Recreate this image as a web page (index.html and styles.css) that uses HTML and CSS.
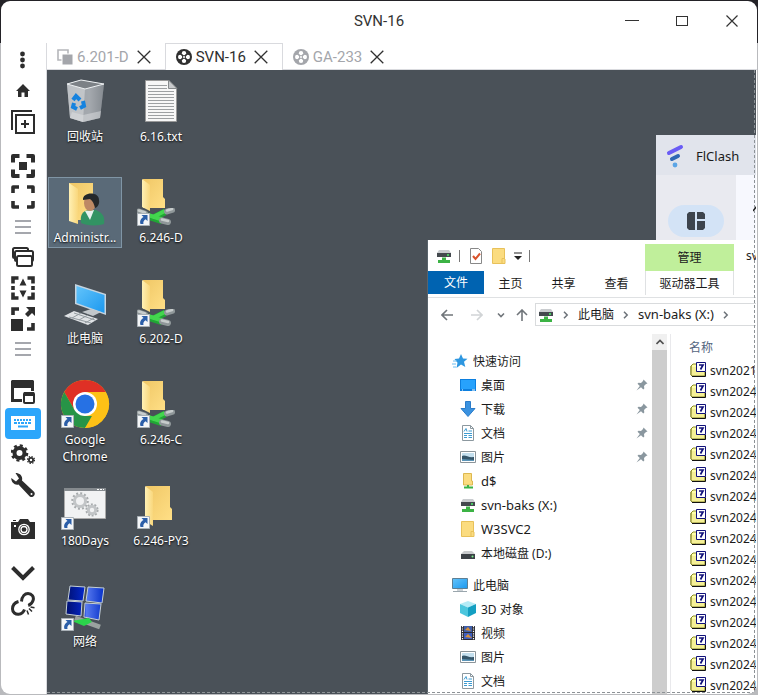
FILE: index.html
```html
<!DOCTYPE html>
<html lang="zh-CN">
<head>
<meta charset="utf-8">
<meta name="viewport" content="width=device-width, initial-scale=1">
<title>SVN-16</title>
<link rel="stylesheet" href="styles.css">
</head>
<body>
<svg class="defs" aria-hidden="true">
  <defs>
    <linearGradient id="gFolder" x1="0" x2="1" y1="0" y2="1"><stop offset="0" stop-color="#f0c766"/><stop offset="1" stop-color="#ffdf86"/></linearGradient>
    <linearGradient id="gFlap" x1="0" x2="1"><stop offset="0" stop-color="#fff0b4"/><stop offset="1" stop-color="#f9d77c"/></linearGradient>
    <linearGradient id="gScreen" x1="0" x2="1" y1="0" y2="1"><stop offset="0" stop-color="#63c4fb"/><stop offset="1" stop-color="#1b98ef"/></linearGradient>
    <linearGradient id="gNavy" x1="0" x2="1"><stop offset="0" stop-color="#001070"/><stop offset=".5" stop-color="#0428cc"/><stop offset=".52" stop-color="#5a7cf0"/><stop offset="1" stop-color="#0630c8"/></linearGradient>
    <linearGradient id="gBin" x1="0" x2="1"><stop offset="0" stop-color="#aeb3b8"/><stop offset=".6" stop-color="#c2c5ca"/><stop offset="1" stop-color="#84898f"/></linearGradient>
  </defs>
  <symbol id="x" viewBox="0 0 14 14"><path d="M.7.7l12.6 12.6M13.3.7L.7 13.3" fill="none" stroke="#303030" stroke-width="1.300"/></symbol>
  <symbol id="film" viewBox="0 0 16 16"><circle cx="8" cy="8" r="8" fill="currentColor"/><g fill="#fff"><circle cx="8" cy="4.200" r="2.200"/><circle cx="8" cy="11.800" r="2.200"/><circle cx="4.200" cy="8" r="2.200"/><circle cx="11.800" cy="8" r="2.200"/></g><path d="M5 5l6 6m0-6l-6 6" stroke="currentColor" stroke-width="1.600"/><circle cx="8" cy="8" r="1" fill="#fff"/></symbol>
  <symbol id="lines" viewBox="0 0 24 24"><path d="M4 6h16M4 12h16M4 18h16" stroke="#a5a7ad" stroke-width="2"/></symbol>
  <symbol id="shortcut" viewBox="0 0 13 13"><path d="M.5.5h12v12H.5z" fill="#f4f6f8" stroke="#a9b0b6"/><path d="M4.500 2h6v6L8.600 6.200C6.500 7.500 6 9 6.500 11H3.500C2.400 8 4 5.500 6.500 4z" fill="#2b5ea8"/></symbol>
  <symbol id="pipe" viewBox="0 0 38 17"><path d="M8 7.500l17 5.500M15 10.500L28 4" stroke="#21a635" stroke-width="6.500"/><path d="M8 6l17 5.500M15 9.500L28 3" stroke="#43d64e" stroke-width="4"/><path d="M2 3.500l6 2M30 3.500l5-1.500M25 12.500l6 1.500" stroke="#8f9799" stroke-width="6" stroke-linecap="round"/><path d="M2 2.500l6 2M30 2.500l5-1.500M25 11.500l6 1.500" stroke="#c7cccc" stroke-width="2.500" stroke-linecap="round"/></symbol>
  <symbol id="netfolder" viewBox="0 0 48 48"><path d="M6 0h20v18l2 2v9H6z" fill="url(#gFolder)"/><path d="M5 0l8 6v26l-8-4z" fill="url(#gFlap)"/><use href="#pipe" x="0" y="29" width="38" height="17"/><use href="#shortcut" x="0" y="34" width="13" height="13"/></symbol>
  <symbol id="star" viewBox="0 0 16 16"><path d="M9 1l2 4.500 4.500.3-3.500 3 1.300 5.200-4.300-2.500L4.500 15l1-5.200L2.500 6l4.500-.4z" fill="#2e97e0"/><path d="M1 8h4M0 11h4M1 14h3" stroke="#6bbdf0"/></symbol>
  <symbol id="desk" viewBox="0 0 16 16"><path d="M0 2h16v12H0z" fill="#0c7fdf"/><path d="M1 3h14v9H1z" fill="#27a2fc"/><path d="M2 13h1m9 0h3" stroke="#fff"/></symbol>
  <symbol id="down" viewBox="0 0 16 16"><path d="M5.500.5h5v7H15l-7 8-7-8h4.500z" fill="#3a92e0" stroke="#2b7cc9"/></symbol>
  <symbol id="doc" viewBox="0 0 16 16"><path d="M2.500.5h8l3 3v12h-11z" fill="#fff" stroke="#8c989f"/><path d="M10.500.5v3h3" fill="none" stroke="#8c989f"/><path d="M4 6.500l2-3 1 3M8.500 6h3.500M4 8.500h8M4 10.500h3m1.500 0H12M4 12.500h3m1.500 0H12" stroke="#3d9bd1" fill="none"/></symbol>
  <symbol id="pic" viewBox="0 0 16 16"><path d="M.5 2.500h15v11H.5z" fill="#fff" stroke="#8b9499"/><path d="M2 4h12v8H2z" fill="#c3dfee"/><path d="M2 7c3-2 6 2 12 1v4H2z" fill="#35566a"/><path d="M2 10l12 1v1H2z" fill="#5b94b7"/></symbol>
  <symbol id="ndrive" viewBox="0 0 16 16"><path d="M3 2h10l2 3H1z" fill="#c9cccf"/><path d="M1 5h14v4H1z" fill="#44494e"/><circle cx="12" cy="7" r="1" fill="#4df06a"/><path d="M6 9.500h4V12h4v3H2v-3h4z" fill="#3cb345"/></symbol>
  <symbol id="drive" viewBox="0 0 16 16"><path d="M4 6h8l3 3H1z" fill="#c9cbcd"/><path d="M1 9h14v5H1z" fill="#3c4146"/><circle cx="12.500" cy="11.500" r="1" fill="#79f08b"/></symbol>
  <symbol id="fold" viewBox="0 0 16 16"><path d="M1.500.5h12V11h.5v4.500H1.500z" fill="#fbdc80" stroke="#e8c15a"/><path d="M11 15v-4.500h3" fill="none" stroke="#e8c15a"/></symbol>
  <symbol id="nfold" viewBox="0 0 16 16"><path d="M3.500.5h8V8h1v4h-9z" fill="#fbdc80" stroke="#ddb850"/><path d="M8 12v2M4 14.500h9" stroke="#3cb345" stroke-width="2"/></symbol>
  <symbol id="pc" viewBox="0 0 16 16"><path d="M.5 1.500h15v10H.5z" fill="url(#gScreen)" stroke="#5d7f94"/><path d="M5 13h6M1 14.500h14" stroke="#9aa6ad"/></symbol>
  <symbol id="cube" viewBox="0 0 16 16"><path d="M8 0l8 3-8 3.500L0 3z" fill="#b5ebf6"/><path d="M0 3l8 3.500V16l-8-4z" fill="#4cc6dd"/><path d="M16 3L8 6.500V16l8-4z" fill="#149fc2"/></symbol>
  <symbol id="video" viewBox="0 0 16 16"><path d="M1 1h14v14H1z" fill="#2c2c34"/><path d="M4 1h8v6H4z" fill="#405fa9"/><path d="M4 8h8v6H4z" fill="#3f5fc0"/><path d="M5 5l3-3 3 4zM5 12l3-3 4 4z" fill="#d8913a"/><path d="M2.500 1v14M13.500 1v14" stroke="#fff" stroke-width="1.200" stroke-dasharray="1.200 1.200"/></symbol>
  <symbol id="pin" viewBox="0 0 12 12"><path d="M7.500.5l4 4-1.500.5-2 2 .3 2.500-1 1L5 8.200.5 11.500 3.800 7 1.500 4.700l1-1L5 4l2-2z" fill="#8a979f"/></symbol>
  <symbol id="file" viewBox="0 0 16 16"><path d="M1 4l2-2h4v11H1z" fill="#ffffa8" stroke="#8b8b22"/><path d="M2 5h13v9H1z" fill="#f5f096"/><path d="M1 4v9l1 1h13V9" fill="none" stroke="#85852a"/><path d="M2 14.500h13.500V10" fill="none" stroke="#111"/><path d="M6.500.5h9v9h-9z" fill="#fff" stroke="#10107a"/><path d="M9 3h4L10.500 7.500" fill="none" stroke="#10107a" stroke-width="1.700"/></symbol>
  <symbol id="chev" viewBox="0 0 8 8"><path d="M2 .8L5.200 4 2 7.200" fill="none" stroke="#6c7278" stroke-width="1.500"/></symbol>
</svg>

<div class="window">
  <header class="titlebar">
    <h1>SVN-16</h1>
    <div class="controls">
      <button aria-label="最小化"><svg viewBox="0 0 14 14"><path d="M0 6.500h14" stroke="#333"/></svg></button>
      <button aria-label="最大化"><svg viewBox="0 0 14 14"><rect x="1.500" y="2.500" width="11" height="9" fill="none" stroke="#333"/></svg></button>
      <button aria-label="关闭"><svg viewBox="0 0 14 14"><path d="M1.500 1.500l11 11m0-11l-11 11" stroke="#333" stroke-width="1.200"/></svg></button>
    </div>
  </header>
  <div class="workspace">
    <aside class="sidebar">
      <div class="group">
        <button aria-label="菜单"><svg viewBox="0 0 24 24"><g fill="#2d2d2d"><circle cx="11.500" cy="6" r="2.400"/><circle cx="11.500" cy="12" r="2.400"/><circle cx="11.500" cy="18" r="2.400"/></g></svg></button>
        <button aria-label="主页"><svg viewBox="0 0 24 24"><path d="M12 5l7 7h-2v6h-3.500v-4.500h-3V18H7v-6H5z" fill="#2d2d2d"/></svg></button>
        <button aria-label="新建"><svg viewBox="0 0 24 24" fill="none" stroke="#2d2d2d" stroke-width="2"><path d="M1 20V1h20M5 5h18v18H5zM14 10v8M10 14h8"/></svg></button>
      </div>
      <div class="group">
        <button aria-label="原始大小"><svg viewBox="0 0 24 24"><path d="M2 8.500V2h6.500M15.500 2H22v6.500M22 15.500V22h-6.500M8.500 22H2v-6.500" fill="none" stroke="#2d2d2d" stroke-width="4" stroke-linejoin="round"/><path d="M8 8h8v8H8z" fill="#2d2d2d"/></svg></button>
        <button aria-label="全屏"><svg viewBox="0 0 24 24"><path d="M2 8V2h6M16 2h6v6M22 16v6h-6M8 22H2v-6" fill="none" stroke="#2d2d2d" stroke-width="3.600" stroke-linejoin="round"/></svg></button>
        <button class="lines" aria-label="分组一"><svg><use href="#lines"/></svg></button>
        <button aria-label="窗口"><svg viewBox="0 0 24 24" fill="#fff" stroke="#2d2d2d" stroke-width="2"><rect x="2" y="3" width="15" height="10" rx="1.500"/><rect x="4" y="6" width="18" height="10" rx="1.500"/><rect x="6" y="11" width="15" height="10" rx="1.500"/></svg></button>
        <button aria-label="自适应"><svg viewBox="0 0 24 24"><path d="M2 7.500V2h5.500M16.500 2H22v5.500M22 16.500V22h-5.500M7.500 22H2v-5.500M2 10v4M22 10v4" fill="none" stroke="#2d2d2d" stroke-width="3.600"/><path d="M12 2.500l3.500 7h-7zM12 21.500l-3.500-7h7z" fill="#2d2d2d"/></svg></button>
        <button aria-label="缩放"><svg viewBox="0 0 24 24"><path d="M0 12h12v12H0z" fill="#2d2d2d"/><path d="M2 8V2h6M22 16v6h-6" fill="none" stroke="#2d2d2d" stroke-width="3.600"/><path d="M15 0h9v9l-3-3-4 4-3-3 4-4z" fill="#2d2d2d"/></svg></button>
        <button class="lines" aria-label="分组二"><svg><use href="#lines"/></svg></button>
      </div>
      <div class="group">
        <button aria-label="画中画"><svg viewBox="0 0 24 24"><path d="M1.500 2v18.500H11M21.500 2v9" fill="none" stroke="#2d2d2d" stroke-width="3"/><path d="M1 0h21l1 1v7H0V1z" fill="#2d2d2d"/><rect x="13" y="13" width="10" height="10" rx="1" fill="#fff" stroke="#2d2d2d" stroke-width="2"/><path d="M13 12h10v4H13z" fill="#2d2d2d"/></svg></button>
        <button class="active" aria-label="键盘"><svg viewBox="0 0 24 24"><path d="M0 5h24v14H0z" fill="#fff"/><path d="M3 9h18" stroke="#2ca6fb" stroke-width="2" stroke-dasharray="2 1"/><path d="M3 12h18" stroke="#2ca6fb" stroke-width="2" stroke-dasharray="3 1 2 1"/><path d="M7 15.500h10" stroke="#2ca6fb" stroke-width="2"/></svg></button>
        <button aria-label="设置"><svg viewBox="0 0 24 24" fill="none" stroke="#2d2d2d"><circle cx="8.500" cy="11" r="5" stroke-width="4"/><circle cx="8.500" cy="11" r="7.600" stroke-width="2.400" stroke-dasharray="3 2.970"/><circle cx="20" cy="18" r="2.100" stroke-width="1.800"/><circle cx="20" cy="18" r="3.500" stroke-width="1.200" stroke-dasharray="1.400 1.350"/></svg></button>
        <button aria-label="工具"><svg viewBox="0 0 24 24"><path d="M4.500 0C9 0 12 3 11 7.500l12 11.300c2.500 3-1.500 7-4.500 4.500L7.500 11.500C3.500 12.500 0 9 .3 5L5 8.500l3-3z" fill="#2d2d2d"/><circle cx="20.500" cy="21" r="1" fill="#fff"/></svg></button>
      </div>
      <div class="group">
        <button aria-label="截图"><svg viewBox="0 0 24 24"><path d="M0 5h7l2-3h8l2 3h5v17H0z" fill="#2d2d2d"/><path d="M2 3.500h3" stroke="#2d2d2d"/><circle cx="13" cy="12.500" r="5.200" fill="#2d2d2d" stroke="#fff" stroke-width="1.300"/><circle cx="13" cy="12.500" r="3" fill="none" stroke="#fff" stroke-width="1.300"/><path d="M3 9h2" stroke="#fff" stroke-width="2"/></svg></button>
      </div>
      <div class="group">
        <button aria-label="展开"><svg viewBox="0 0 24 24"><path d="M1.500 6.500L12 17 22.500 6.500" fill="none" stroke="#2d2d2d" stroke-width="4"/></svg></button>
        <button aria-label="断开连接"><svg viewBox="0 0 24 24" fill="none" stroke="#2d2d2d" stroke-width="3"><path d="M10.500 9.500C11 4 14 1.500 17 1.500c4 0 6 3.500 5.200 6.500-.7 3-2.200 4.500-5 5.500M7.500 9.500C4 10.500 1.500 13 1.500 17c0 3.500 3 5.500 6 5.300 3-.3 5-2 6-4.800"/><path d="M16 18.500l1.500 4M18 16.500l3 3M19.500 15l4 .8" stroke-width="1.500"/></svg></button>
      </div>
    </aside>

    <main>
      <nav class="tabs" aria-label="会话">
        <div class="tab"><svg class="ticon" viewBox="0 0 16 16"><path d="M1 1h10v10H1z" fill="none" stroke="#b5b6ba" stroke-width="1.600"/><path d="M5 5h11v11H5z" fill="#a4a6ab" stroke="#fff"/></svg><a href="#s1">6.201-D</a><button aria-label="关闭 6.201-D"><svg><use href="#x"/></svg></button></div>
        <div class="tab current"><svg class="ticon"><use href="#film"/></svg><a href="#s2">SVN-16</a><button aria-label="关闭 SVN-16"><svg><use href="#x"/></svg></button></div>
        <div class="tab"><svg class="ticon"><use href="#film"/></svg><a href="#s3">GA-233</a><button aria-label="关闭 GA-233"><svg><use href="#x"/></svg></button></div>
      </nav>

      <section class="desktop">
        <div class="shortcuts">
          <div class="item"><svg viewBox="0 0 48 48"><path d="M6 5L20 1l23 4-4 34-17 4-13-4z" fill="url(#gBin)"/><path d="M6 5l18 5-2 33-13-4z" fill="#c4c7cb" opacity=".65"/><path d="M24 10l19-5-4 34-17 4z" fill="#888d94" opacity=".5"/><path d="M6 5l14-4 23 4-19 5z" fill="#7c8186" stroke="#edf0f2"/><path d="M11 33l11 3 18-4-1 7-17 4-13-4z" fill="#dde0e2" opacity=".5"/><g fill="none" stroke="#1683df" stroke-width="4"><path d="M12 21l3-4 4 4M22 22l1 5-4 2M16 30l-4-2 1-4"/></g></svg><span>回收站</span></div>
          <div class="item"><svg viewBox="0 0 48 48"><path d="M8.500 1.500h23l8 8v33h-31z" fill="#f7f7f7" stroke="#999"/><path d="M31.500 1v8.500H40z" fill="#c8cacc" stroke="#85898b"/><path d="M11 6.500h19M11 9.500h19M11 12.500h26M11 15.500h26M11 18.500h26M11 21.500h26M11 24.500h26M11 27.500h26M11 30.500h26M11 33.500h26M11 36.500h26M11 39.500h26" stroke="#9da0a2"/></svg><span>6.16.txt</span></div>
          <div class="item selected"><svg viewBox="0 0 48 48"><path d="M8 3h24v37H8z" fill="url(#gFolder)"/><path d="M8 3l9 6v35l-9-3z" fill="url(#gFlap)"/><path d="M20 43c-1-8 1-12 8-13h7c7 3 9 7 8 14-5 2-18 2-23-1z" fill="#329363"/><path d="M24 31l5 9 4-10z" fill="#e7f2ee"/><ellipse cx="29" cy="23" rx="6" ry="8" fill="#bd8964"/><path d="M22 20c-1-8 16-9 16 0 1 4-2 8-4 8-1-4-2-7-5-9z" fill="#25282a"/></svg><span>Administr...</span></div>
          <div class="item"><svg viewBox="0 1 48 48"><use href="#netfolder" width="48" height="48"/></svg><span>6.246-D</span></div>
          <div class="item"><svg viewBox="0 0 48 48"><path d="M14 3l31 10v21L14 23z" fill="#c6d4df"/><path d="M15.500 5L43.500 14v18L15.500 22z" fill="url(#gScreen)"/><path d="M21 31l9-3 10 3-8 4z" fill="#c2c7cb"/><path d="M3 35l10-5 24 8-10 6z" fill="#dfe2e5"/><path d="M8 36l22 6M13 32l21 7M11 37l9-5M18 39l9-5M24 42l9-5" stroke="#949ca1"/></svg><span>此电脑</span></div>
          <div class="item"><svg viewBox="0 1 48 48"><use href="#netfolder" width="48" height="48"/></svg><span>6.202-D</span></div>
          <div class="item"><svg viewBox="0 2 48 48"><circle cx="24" cy="24" r="24" fill="#fdc116"/><path d="M3.200 12A24 24 0 0144.800 12H24L13.600 30z" fill="#df3025"/><path d="M3.200 12L13.600 30 24 36h10.400L24 48A24 24 0 013.200 12z" fill="#279447"/><path d="M34.400 30L24 48a24 24 0 0020.800-36H24z" fill="#fdc116"/><circle cx="24" cy="24" r="12" fill="#fff"/><circle cx="24" cy="24" r="9.500" fill="#2671e4"/><use href="#shortcut" x="0" y="35" width="13" height="13"/></svg><span>Google Chrome</span></div>
          <div class="item"><svg viewBox="0 1 48 48"><use href="#netfolder" width="48" height="48"/></svg><span>6.246-C</span></div>
          <div class="item"><svg viewBox="0 1 48 48"><path d="M3.500 6.500h41v30h-41z" fill="#f1f2f3" stroke="#aaa"/><path d="M3 6h42v3H3z" fill="#858a8e"/><path d="M36 7.500h7" stroke="#fff" stroke-dasharray="2 1"/><g fill="none" stroke="#a7abad"><circle cx="19" cy="19" r="5.500" stroke-width="3" stroke="#c2c5c7"/><circle cx="19" cy="19" r="7.800" stroke-width="2" stroke-dasharray="2 2.080"/><circle cx="31" cy="28" r="3.700" stroke-width="3" stroke="#c2c5c7"/><circle cx="31" cy="28" r="5.800" stroke-width="1.600" stroke-dasharray="2 1.640"/></g><use href="#shortcut" y="35" width="13" height="13"/></svg><span>180Days</span></div>
          <div class="item"><svg viewBox="0 1 48 48"><path d="M9 4h24v21l2 2v11H9z" fill="url(#gFolder)"/><path d="M8 4l8 6v34l-8-5z" fill="url(#gFlap)"/><use href="#shortcut" y="34" width="13" height="13"/></svg><span>6.246-PY3</span></div>
          <div class="item"><svg viewBox="0 0 48 48"><g fill="url(#gNavy)" stroke="#c5d0d6"><path d="M9 2l15 1-2 14-15-1zM27 3l16 1-2 15-16-2zM6 17l15 1-1 14-15-2zM24 19l16 1-2 16-15-3z"/></g><path d="M14 34l25 9" stroke="#9aa29f" stroke-width="5"/><path d="M11 37l17-3 3 4-8 4z" fill="#2bd54b"/><use href="#shortcut" y="34" width="13" height="13"/></svg><span>网络</span></div>
        </div>

        <article class="flclash">
          <header><svg viewBox="0 0 20 24"><g stroke-linecap="round"><path d="M3 9l12-6" stroke="#6a5cf5" stroke-width="4"/><path d="M6 15l6-3" stroke="#2f68b4" stroke-width="4"/></g><circle cx="9" cy="21" r="2.400" fill="#5ba5e6"/></svg><span>FlClash</span></header>
          <div class="flbody"><div class="rail"><button aria-label="仪表盘"><svg viewBox="0 0 18 18" fill="#3d444d"><path d="M2 0h6v18H2L0 16V2zM10 0h6l2 2v5h-8zM10 9h8v7l-2 2h-6z"/></svg></button></div><div class="page"><svg viewBox="0 0 8 8"><path d="M0 6l4-5 4 5" fill="none" stroke="#222" stroke-width="1.500"/></svg></div></div>
        </article>

        <article class="explorer">
          <header class="quickbar">
            <svg class="i16"><use href="#ndrive"/></svg><i class="sep"></i>
            <svg class="i16" viewBox="0 0 16 16"><path d="M2.500.5h8l3 3v12h-11z" fill="#fff" stroke="#888"/><path d="M5 8l2.500 3L12 5.500" fill="none" stroke="#d9532c" stroke-width="2"/></svg>
            <svg class="i16"><use href="#fold"/></svg>
            <svg class="caret" viewBox="0 0 8 8"><path d="M0 1h8" stroke="#222"/><path d="M0 4h8L4 8z" fill="#222"/></svg><i class="sep"></i>
            <span class="context">管理</span><span class="wtitle">svn-baks (X:)</span>
          </header>
          <div class="ribbon"><button class="fileb">文件</button><button>主页</button><button>共享</button><button>查看</button><button class="tools">驱动器工具</button></div>
          <div class="address">
            <button aria-label="后退"><svg viewBox="0 0 12 12"><path d="M12 6H1M6 1L1 6l5 5" fill="none" stroke="#70757a" stroke-width="1.600"/></svg></button>
            <button aria-label="前进"><svg viewBox="0 0 12 12"><path d="M0 6h11M6 1l5 5-5 5" fill="none" stroke="#d1d4d6" stroke-width="1.600"/></svg></button>
            <button class="recent" aria-label="最近"><svg viewBox="0 0 12 12"><path d="M3 4.500l3 3 3-3" fill="none" stroke="#70757a" stroke-width="1.600"/></svg></button>
            <button class="up" aria-label="向上"><svg viewBox="0 0 12 12"><path d="M6 12V1M1 6l5-5 5 5" fill="none" stroke="#70757a" stroke-width="1.600"/></svg></button>
            <div class="crumbs"><svg class="i16"><use href="#ndrive"/></svg><svg class="chev"><use href="#chev"/></svg><a href="#pc">此电脑</a><svg class="chev"><use href="#chev"/></svg><a class="latin" href="#x">svn-baks (X:)</a><svg class="chev"><use href="#chev"/></svg></div>
          </div>
          <div class="panes">
            <ul class="tree">
              <li class="root"><svg class="i16"><use href="#star"/></svg>快速访问</li>
              <li><svg class="i16"><use href="#desk"/></svg>桌面<svg class="pin"><use href="#pin"/></svg></li>
              <li><svg class="i16"><use href="#down"/></svg>下载<svg class="pin"><use href="#pin"/></svg></li>
              <li><svg class="i16"><use href="#doc"/></svg>文档<svg class="pin"><use href="#pin"/></svg></li>
              <li><svg class="i16"><use href="#pic"/></svg>图片<svg class="pin"><use href="#pin"/></svg></li>
              <li class="latin"><svg class="i16"><use href="#nfold"/></svg>d$</li>
              <li class="latin"><svg class="i16"><use href="#ndrive"/></svg>svn-baks (X:)</li>
              <li class="latin"><svg class="i16"><use href="#fold"/></svg>W3SVC2</li>
              <li><svg class="i16"><use href="#drive"/></svg>本地磁盘 (D:)</li>
              <li class="root second"><svg class="i16"><use href="#pc"/></svg>此电脑</li>
              <li><svg class="i16"><use href="#cube"/></svg>3D 对象</li>
              <li><svg class="i16"><use href="#video"/></svg>视频</li>
              <li><svg class="i16"><use href="#pic"/></svg>图片</li>
              <li><svg class="i16"><use href="#doc"/></svg>文档</li>
            </ul>
            <div class="scroll"><button aria-label="向上滚动"><svg viewBox="0 0 8 8"><path d="M.5 6L4 2.500 7.500 6" fill="none" stroke="#505050" stroke-width="1.600"/></svg></button></div>
            <table class="files">
              <thead><tr><th>名称</th></tr></thead>
              <tbody>
                <tr><td><svg class="i16"><use href="#file"/></svg>svn2021</td></tr>
                <tr><td><svg class="i16"><use href="#file"/></svg>svn2024</td></tr>
                <tr><td><svg class="i16"><use href="#file"/></svg>svn2024</td></tr>
                <tr><td><svg class="i16"><use href="#file"/></svg>svn2024</td></tr>
                <tr><td><svg class="i16"><use href="#file"/></svg>svn2024</td></tr>
                <tr><td><svg class="i16"><use href="#file"/></svg>svn2024</td></tr>
                <tr><td><svg class="i16"><use href="#file"/></svg>svn2024</td></tr>
                <tr><td><svg class="i16"><use href="#file"/></svg>svn2024</td></tr>
                <tr><td><svg class="i16"><use href="#file"/></svg>svn2024</td></tr>
                <tr><td><svg class="i16"><use href="#file"/></svg>svn2024</td></tr>
                <tr><td><svg class="i16"><use href="#file"/></svg>svn2024</td></tr>
                <tr><td><svg class="i16"><use href="#file"/></svg>svn2024</td></tr>
                <tr><td><svg class="i16"><use href="#file"/></svg>svn2024</td></tr>
                <tr><td><svg class="i16"><use href="#file"/></svg>svn2024</td></tr>
                <tr><td><svg class="i16"><use href="#file"/></svg>svn2024</td></tr>
                <tr><td><svg class="i16"><use href="#file"/></svg>svn2024</td></tr>
              </tbody>
            </table>
          </div>
        </article>
        <div class="edge"></div>
      </section>
    </main>
  </div>
</div>
</body>
</html>
```

FILE: styles.css
```css
* { box-sizing: border-box; }
body {
  margin: 0;
  height: 100vh;
  padding: 1px;
  overflow: hidden;
  background: linear-gradient(#232227 43px, #b9babd 43px);
  color: #1b1b1b;
  font: 12px/17px "Noto Sans", "Noto Sans CJK SC", sans-serif;
}
.defs { position: absolute; width: 0; height: 0; }
svg { display: block; flex: none; }
button { border: 0; padding: 0; background: none; color: inherit; font: inherit; display: grid; place-items: center; }
a { color: inherit; text-decoration: none; }
.window { height: 100%; display: flex; flex-direction: column; background: #fff; border-radius: 9px; overflow: hidden; }

.titlebar { height: 42px; flex: none; display: grid; grid-template-columns: 1fr auto 1fr; align-items: center; padding-bottom: 2px; }
.titlebar h1 { grid-column: 2; margin: 0; font: 15px/20px Roboto, sans-serif; color: #333; }
.controls { display: flex; justify-content: flex-end; }
.controls button { width: 50px; height: 40px; }
.controls svg { width: 14px; height: 14px; }

.workspace { flex: 1; min-height: 0; display: flex; }
.sidebar { width: 46px; flex: none; padding: 2px 6px 0 4px; display: flex; flex-direction: column; gap: 13px; border-right: 1px solid #d9dade; }
.sidebar button { width: 36px; height: 31px; padding-top: 3px; place-items: start center; border-radius: 4px; }
.sidebar .lines { height: 29px; padding-top: 2px; }
.sidebar .active { background: #2ca6fb; }
.sidebar svg { width: 24px; height: 24px; }
main { flex: 1; min-width: 0; display: flex; flex-direction: column; }

.tabs { height: 27px; flex: none; display: flex; box-shadow: inset 0 -1px #d9dade; }
.tab { display: flex; align-items: center; padding: 0 14px 0 10px; gap: 4px; color: #a4a6ab; font: 15px/20px Roboto, sans-serif; }
.tab.current { color: #303030; border: 1px solid #d9dade; border-bottom: 0; background: #fff; }
.ticon { width: 16px; height: 16px; }
.tab button { margin-left: 4px; }
.tab button svg { width: 14px; height: 14px; }

.desktop { position: relative; flex: 1; min-height: 0; overflow: hidden; background: #4a5158; margin-right: 1px; }
.shortcuts { display: grid; grid-template-columns: repeat(2, 76px); grid-auto-rows: 101px; padding-top: 6px; justify-items: center; align-items: start; }
.item { width: 74px; display: flex; flex-direction: column; align-items: center; gap: 1px; padding: 2px 0 1px; border: 1px solid transparent; color: #fff; text-align: center; text-shadow: 0 1px 2px #000; }
.item.selected { background: #5a6a78; border-color: #8095a5; }
.item svg { width: 48px; height: 48px; overflow: visible; }

.flclash { position: absolute; left: 609px; right: 0; top: 65px; height: 220px; background: #e9eaf0; display: flex; flex-direction: column; overflow: hidden; }
.flclash header { height: 40px; background: #e1e4ec; display: flex; align-items: center; padding: 2px 0 0 10px; gap: 10px; font-size: 13px; }
.flclash header svg { width: 20px; height: 24px; }
.flbody { flex: 1; display: flex; }
.rail { width: 80px; flex: none; padding: 30px 12px; }
.rail button { width: 56px; height: 32px; border-radius: 16px; background: #d3e3f6; }
.rail svg { width: 18px; height: 18px; }
.page { flex: 1; padding: 30px 0 0 17px; background: #f7f8fe; }
.page svg { width: 8px; height: 8px; }

.explorer { position: absolute; left: 380px; right: 0; top: 170px; bottom: 0; background: #fff; display: flex; flex-direction: column; overflow: hidden; white-space: nowrap; border-left: 1px solid #59646c; }
.latin { font-size: 13px; }
.i16 { width: 16px; height: 16px; }
.quickbar { height: 31px; flex: none; display: flex; align-items: center; padding-left: 8px; gap: 7px; }
.sep { width: 1px; height: 12px; margin-right: 1px; background: #777; }
.caret { width: 8px; height: 8px; }
.context { width: 89px; height: 27px; margin: 4px 5px 0 auto; background: #c0ef9b; text-align: center; line-height: 27px; }
.wtitle { width: 10px; overflow: hidden; }
.ribbon { height: 27px; flex: none; display: flex; border-bottom: 1px solid #dfe1e3; }
.ribbon button { width: 53px; height: 24px; }
.ribbon .fileb { width: 56px; height: 23px; background: #0063b1; color: #fff; }
.ribbon .tools { width: 89px; margin-left: 2px; border: solid #dfe1e3; border-width: 0 1px; }
.address { display: flex; align-items: center; padding: 5px 0 8px 10px; }
.address button { width: 18px; height: 22px; margin-right: 12px; }
.address .recent { margin: 0 3px 0 -6px; }
.address .up { margin-right: 4px; }
.address button svg { width: 12px; height: 12px; }
.crumbs { flex: 1; height: 23px; display: flex; align-items: center; gap: 8px; padding-left: 2px; border: 1px solid #d9dbdd; border-right: 0; }
.chev { width: 8px; height: 8px; }
.panes { flex: 1; min-height: 0; display: flex; }
.tree { width: 224px; flex: none; margin: 0; padding: 15px 0 0; list-style: none; }
.tree li { height: 24px; display: flex; align-items: center; gap: 5px; padding: 0 4px 0 32px; }
.tree .root { padding-left: 24px; }
.tree .second { margin-top: 8px; }
.pin { width: 12px; height: 12px; margin-left: auto; }
.scroll { width: 15px; flex: none; background: #cdcdcd; }
.scroll button { width: 15px; height: 16px; background: #f0f0f0; }
.scroll svg { width: 8px; height: 8px; }
.files { margin-left: 3px; border-left: 1px solid #e9e9ec; border-spacing: 0; align-self: flex-start; }
.files th { height: 26px; padding: 0 0 0 18px; text-align: left; font-weight: 400; color: #53657e; }
.files td { height: 21px; padding: 0 0 0 19px; }
.files td svg { float: left; margin-right: 4px; }
.edge { position: absolute; inset: 0 1px 1px 0; border: dashed #8d9296; border-width: 0 1px 1px 0; pointer-events: none; }
```
